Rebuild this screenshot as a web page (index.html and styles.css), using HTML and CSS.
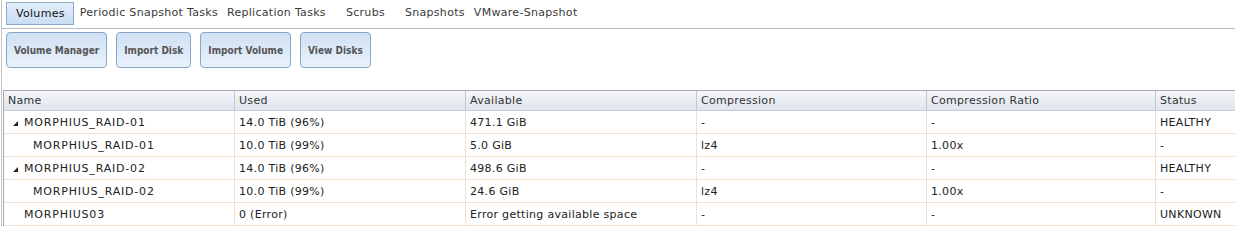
FILE: index.html
```html
<!DOCTYPE html>
<html>
<head>
<meta charset="utf-8">
<link rel="stylesheet" href="styles.css">
</head>
<body>
<div class="page">
  <div class="tabs">
    <div class="tab active">Volumes</div>
    <div class="tab">Periodic Snapshot Tasks</div>
    <div class="tab">Replication Tasks</div>
    <div class="tab spaced">Scrubs</div>
    <div class="tab spaced">Snapshots</div>
    <div class="tab">VMware-Snapshot</div>
  </div>
  <div class="toolbar">
    <button class="btn">Volume Manager</button>
    <button class="btn">Import Disk</button>
    <button class="btn">Import Volume</button>
    <button class="btn">View Disks</button>
  </div>
  <div class="grid">
    <div class="row head">
      <div class="cell">Name</div>
      <div class="cell">Used</div>
      <div class="cell">Available</div>
      <div class="cell">Compression</div>
      <div class="cell">Compression Ratio</div>
      <div class="cell">Status</div>
    </div>
    <div class="row">
      <div class="cell name"><svg class="tri" width="5" height="5" viewBox="0 0 5 5"><polygon points="5,0 5,5 0,5" fill="#222"/></svg>MORPHIUS_RAID-01</div>
      <div class="cell">14.0 TiB (96%)</div>
      <div class="cell">471.1 GiB</div>
      <div class="cell">-</div>
      <div class="cell">-</div>
      <div class="cell">HEALTHY</div>
    </div>
    <div class="row">
      <div class="cell name child">MORPHIUS_RAID-01</div>
      <div class="cell">10.0 TiB (99%)</div>
      <div class="cell">5.0 GiB</div>
      <div class="cell">lz4</div>
      <div class="cell">1.00x</div>
      <div class="cell">-</div>
    </div>
    <div class="row">
      <div class="cell name"><svg class="tri" width="5" height="5" viewBox="0 0 5 5"><polygon points="5,0 5,5 0,5" fill="#222"/></svg>MORPHIUS_RAID-02</div>
      <div class="cell">14.0 TiB (96%)</div>
      <div class="cell">498.6 GiB</div>
      <div class="cell">-</div>
      <div class="cell">-</div>
      <div class="cell">HEALTHY</div>
    </div>
    <div class="row">
      <div class="cell name child">MORPHIUS_RAID-02</div>
      <div class="cell">10.0 TiB (99%)</div>
      <div class="cell">24.6 GiB</div>
      <div class="cell">lz4</div>
      <div class="cell">1.00x</div>
      <div class="cell">-</div>
    </div>
    <div class="row">
      <div class="cell name leaf">MORPHIUS03</div>
      <div class="cell">0 (Error)</div>
      <div class="cell">Error getting available space</div>
      <div class="cell">-</div>
      <div class="cell">-</div>
      <div class="cell">UNKNOWN</div>
    </div>
  </div>
</div>
</body>
</html>
```

FILE: styles.css
```css
html, body {
  margin: 0;
  padding: 0;
  background: #fff;
  overflow: hidden;
}
body {
  font-family: "DejaVu Sans", Verdana, sans-serif;
  font-size: 11px;
  letter-spacing: 0.3px;
  color: #222;
}
.page {
  width: 1500px;
  height: 226px;
  margin-left: 1px;
  border-left: 1px solid #c4c4c8;
}
.tabs {
  display: flex;
  align-items: flex-start;
  padding: 2px 0 0 4px;
  box-sizing: border-box;
  height: 29px;
  border-bottom: 1px solid #b9b8c2;
}
.tab {
  height: 23px;
  line-height: 21px;
  padding: 0 4px 0 5px;
  color: #3a3a3a;
  box-sizing: border-box;
  white-space: nowrap;
}
.tab.active {
  padding: 0 8px 0 9px;
  margin-right: 1px;
  border: 1px solid #8fa9ca;
  background: linear-gradient(#e3eefa, #c9ddf3);
  color: #111;
}
.tab.spaced {
  margin-left: 11px;
}
.toolbar {
  display: flex;
  gap: 9px;
  padding: 3px 0 0 4px;
  height: 61px;
  box-sizing: border-box;
}
.btn {
  height: 36px;
  padding: 0 7px;
  border: 1px solid #86a5ca;
  border-radius: 4px;
  background: linear-gradient(#cfe0f3, #e9f2fb);
  font-family: "DejaVu Sans Condensed", "DejaVu Sans", sans-serif;
  font-size: 10px;
  letter-spacing: 0;
  font-weight: bold;
  color: #555;
}
.grid {
  margin-left: 1px;
  border-left: 1px solid #a9a9ad;
  width: 1400px;
}
.row {
  display: grid;
  grid-template-columns: 230px 231px 231px 230px 229px 240px;
  height: 23px;
  border-bottom: 1px solid #f1dfcf;
  box-sizing: border-box;
}
.row.head {
  height: 21px;
  border-top: 1px solid #a6a8ac;
  border-bottom: 1px solid #c8cbd0;
  background: linear-gradient(#f4f6f9, #dfe5ee);
}
.cell {
  display: flex;
  align-items: center;
  padding-left: 4px;
  border-left: 1px solid #f1dfcf;
  white-space: nowrap;
  overflow: hidden;
}
.cell:first-child {
  border-left: none;
}
.head .cell {
  border-left: 1px solid #c3c6cc;
  color: #333;
}
.head .cell:first-child {
  border-left: none;
}
.cell.name {
  padding-left: 9px;
  letter-spacing: 0.8px;
}
.tri {
  margin-right: 6px;
  margin-top: 2px;
}
.cell.child {
  padding-left: 29px;
}
.cell.leaf {
  padding-left: 20px;
}
```
